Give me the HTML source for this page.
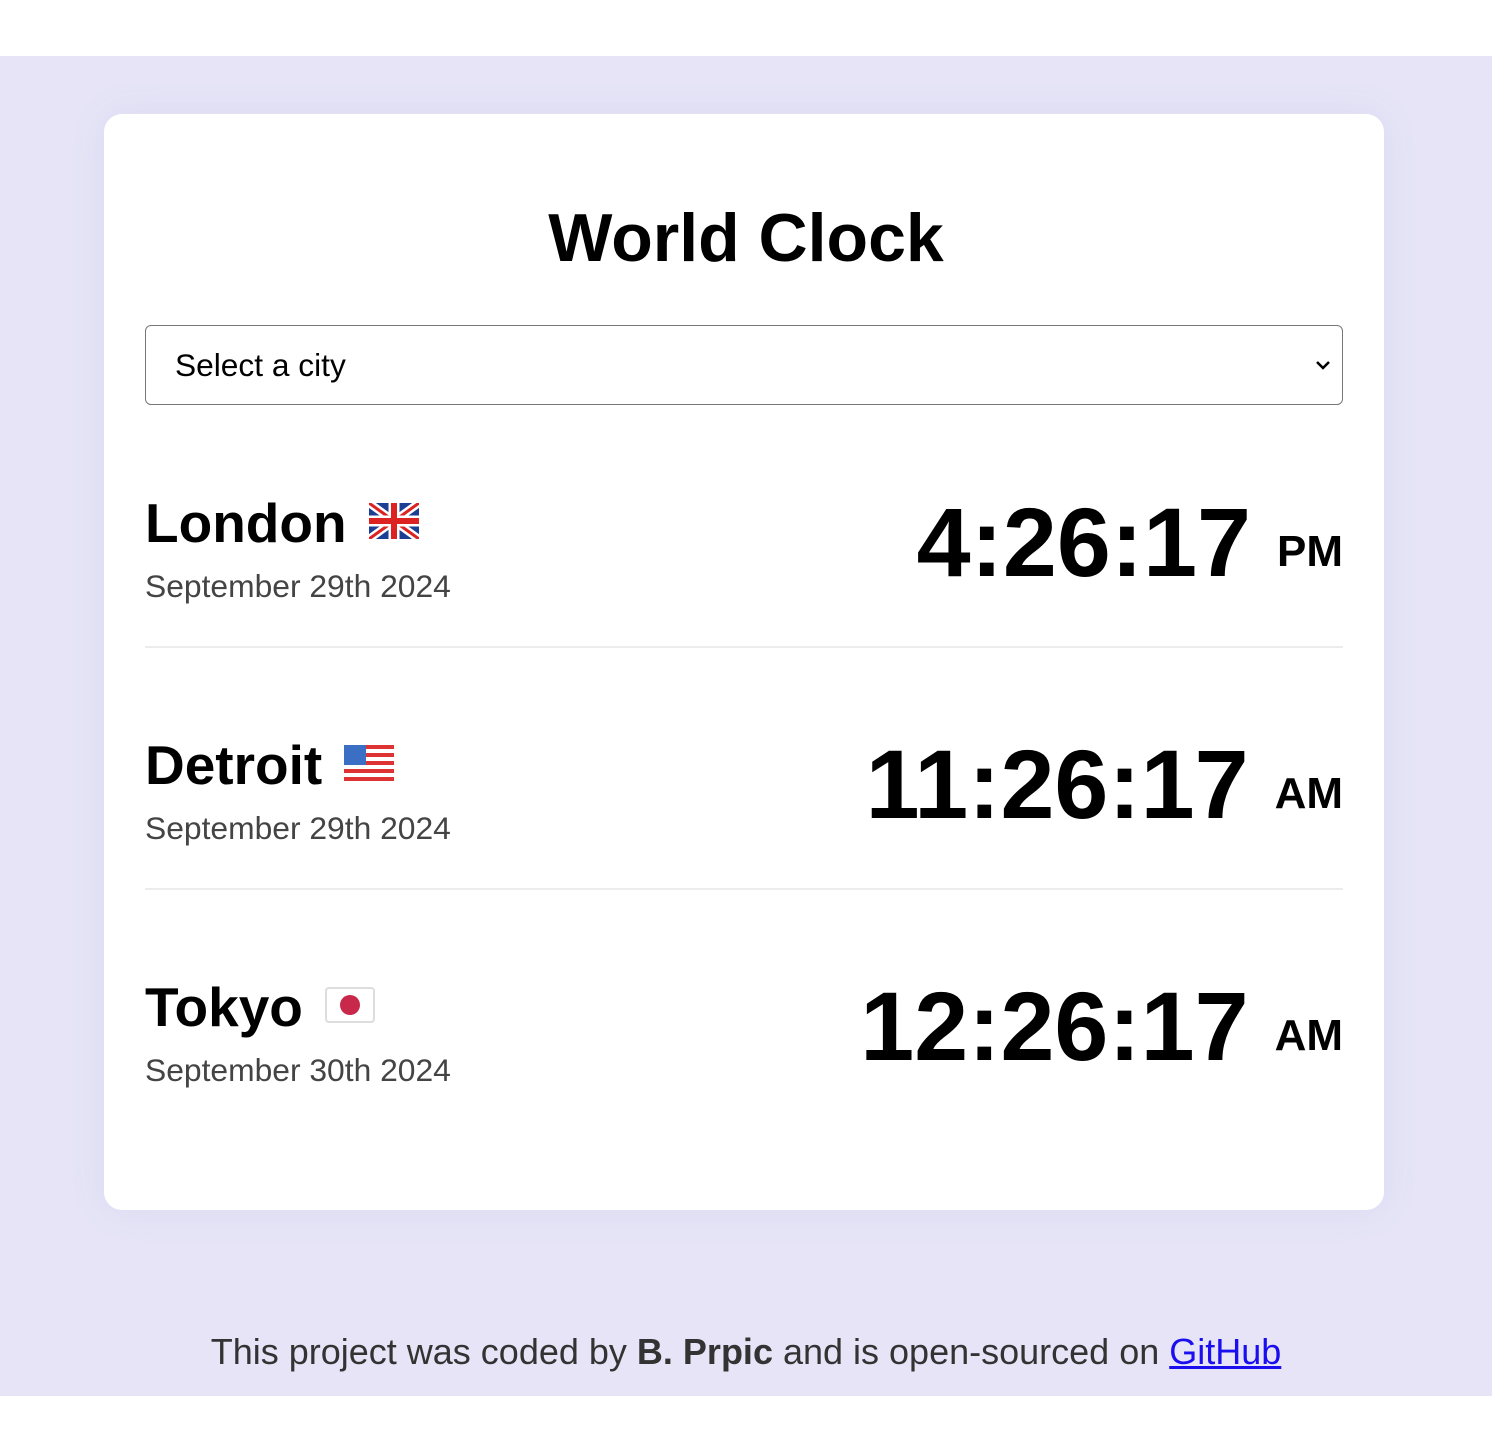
<!DOCTYPE html>
<html><head><style>
body{margin:0;width:1492px;height:1452px;background:#fff;font-family:"Liberation Sans",sans-serif;position:relative;overflow:hidden}
.bg{position:absolute;left:0;top:56px;width:1492px;height:1340px;background:#e6e4f6}
.card{position:absolute;left:104px;top:114px;width:1280px;height:1096px;background:#fff;border-radius:18px;box-shadow:0 0 40px rgba(120,110,200,.08)}
h1{position:absolute;left:0;width:100%;top:200px;margin:0;text-align:center;font-size:68px;font-weight:bold;line-height:76px}
.sel{position:absolute;left:145px;top:325px;width:1196px;height:78px;border:1.5px solid #777;border-radius:6px;font-size:31.7px;line-height:78px;box-sizing:content-box}
.sel span{position:absolute;left:29px}
.sel svg{position:absolute;right:10px;top:32px}
.row{position:absolute;left:145px;width:1198px}
.city{position:absolute;left:0;font-size:55px;font-weight:bold;line-height:60px}
.city svg{vertical-align:middle;margin-left:22px;margin-top:-12px}
.date{position:absolute;left:0;font-size:31.8px;color:#444;line-height:36px}
.time{position:absolute;right:0;font-size:97px;font-weight:bold;line-height:110px;white-space:nowrap}
.time small{font-size:44px;margin-left:26px;vertical-align:10px}
.hr{position:absolute;left:145px;width:1198px;height:2px;background:#ececec}
.foot{position:absolute;left:0;width:1492px;text-align:center;top:1330px;font-size:36px;color:#333;line-height:44px}
.foot a{color:#1a0dee;text-decoration:underline}
</style></head><body>
<div class="bg"></div>
<div class="card"></div>
<h1>World Clock</h1>
<div class="sel"><span>Select a city</span><svg width="18" height="14" viewBox="0 0 18 14"><path d="M3 4l6 6 6-6" fill="none" stroke="#000" stroke-width="2.5"/></svg></div>

<div class="row" style="top:490px">
<div class="city" style="top:3px">London<svg width="50" height="36" viewBox="0 0 50 36"><rect width="50" height="36" rx="3" fill="#1c3f94"/><path d="M0 0L50 36M50 0L0 36" stroke="#fff" stroke-width="8"/><path d="M0 0L50 36M50 0L0 36" stroke="#d22" stroke-width="3"/><path d="M25 0V36M0 18H50" stroke="#fff" stroke-width="11"/><path d="M25 0V36M0 18H50" stroke="#d22" stroke-width="6"/></svg></div>
<div class="date" style="top:78px">September 29th 2024</div>
<div class="time" style="top:-2px">4:26:17<small>PM</small></div>
</div>
<div class="hr" style="top:646px"></div>

<div class="row" style="top:732px">
<div class="city" style="top:3px">Detroit<svg width="50" height="36" viewBox="0 0 50 36"><rect width="50" height="36" rx="3" fill="#fff"/><g fill="#d33"><rect y="0" width="50" height="4"/><rect y="8" width="50" height="4"/><rect y="16" width="50" height="4"/><rect y="24" width="50" height="4"/><rect y="32" width="50" height="4"/></g><rect width="22" height="20" fill="#3b6fc4"/></svg></div>
<div class="date" style="top:78px">September 29th 2024</div>
<div class="time" style="top:-2px">11:26:17<small>AM</small></div>
</div>
<div class="hr" style="top:888px"></div>

<div class="row" style="top:974px">
<div class="city" style="top:3px">Tokyo<svg width="50" height="36" viewBox="0 0 50 36"><rect x="1" y="1" width="48" height="34" rx="3" fill="#fff" stroke="#ddd" stroke-width="2"/><circle cx="25" cy="18" r="10" fill="#c8284a"/></svg></div>
<div class="date" style="top:78px">September 30th 2024</div>
<div class="time" style="top:-2px">12:26:17<small>AM</small></div>
</div>

<div class="foot">This project was coded by <b>B. Prpic</b> and is open-sourced on <a>GitHub</a></div>
</body></html>
